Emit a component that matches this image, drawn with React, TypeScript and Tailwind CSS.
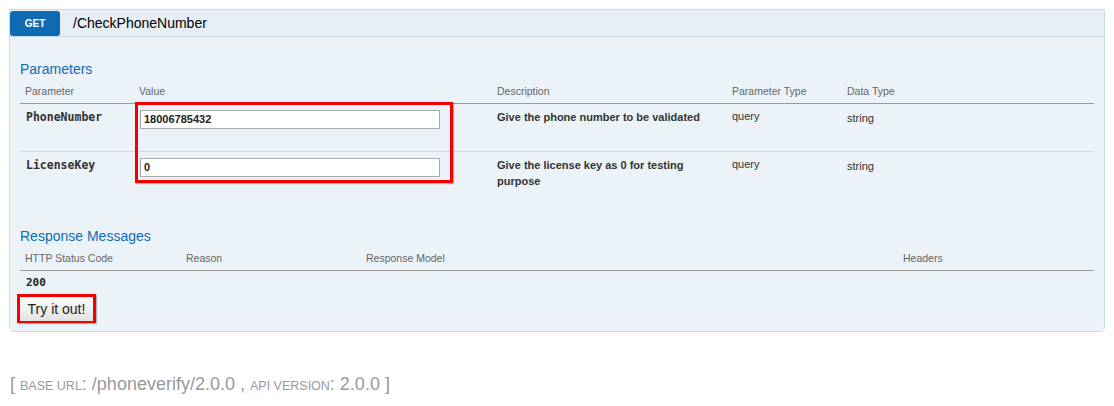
import React from "react";

const PARAMS = [
  { name: "PhoneNumber", value: "18006785432", desc: "Give the phone number to be validated", ptype: "query", dtype: "string", h: "h-[48px] border-b border-[#d4d8dc]" },
  { name: "LicenseKey", value: "0", desc: "Give the license key as 0 for testing purpose", ptype: "query", dtype: "string", h: "h-[48px]" },
];

const SANS = "font-['Liberation_Sans',Arial,sans-serif]";
const MONO = "font-['DejaVu_Sans_Mono',monospace]";

export default function App() {
  return (
    <div className={`relative w-[1114px] h-[406px] bg-white pt-[9px] pl-[9px] ${SANS}`}>
      {/* Operation panel */}
      <div className="w-[1096px] border border-[#c3d9ec] rounded-b-[5px] overflow-hidden">
        <div className="h-[27px] bg-[#e7eef6] border-b border-[#c3d9ec] flex items-center">
          <span className="w-[50px] h-[25px] bg-[#0f6ab4] rounded-[3px] text-white text-[10px] font-bold flex items-center justify-center">GET</span>
          <span className="ml-[13px] text-[14px] text-black">/CheckPhoneNumber</span>
        </div>

        <div className="bg-[#ebf3f9] px-[10px] pt-[22px] pb-[8px]">
          <h4 className="text-[#0f6ab4] text-[14px] leading-[20px]">Parameters</h4>

          {/* Parameter table */}
          <div className="grid grid-cols-[114px_358px_235px_115px_1fr] h-[25px] pt-[2px] items-center border-b border-[#9a9a9a] text-[10.5px] text-[#666]">
            <div className="pl-[5px]">Parameter</div>
            <div className="pl-[5px]">Value</div>
            <div className="pl-[5px]">Description</div>
            <div className="pl-[5px]">Parameter Type</div>
            <div className="pl-[5px]">Data Type</div>
          </div>
          {PARAMS.map((p) => (
            <div key={p.name} className={`grid grid-cols-[114px_358px_235px_115px_1fr] ${p.h} text-[#333]`}>
              <div className={`pl-[6px] pt-[6px] text-[11.5px] font-bold leading-[14px] ${MONO}`}>{p.name}</div>
              <div className="pl-[6px] pt-[6px]">
                <div className="w-[300px] h-[19px] bg-white border border-[#aaa] px-[3px] text-[11px] font-bold leading-[17px] text-[#222]">{p.value}</div>
              </div>
              <div className="pl-[5px] pt-[5px] pr-[20px] text-[11px] font-bold leading-[16px]">{p.desc}</div>
              <div className="pl-[5px] pt-[5px] text-[11px] leading-[14px]">{p.ptype}</div>
              <div className="pl-[5px] pt-[7px] text-[11px] leading-[14px]">{p.dtype}</div>
            </div>
          ))}

          <h4 className="mt-[26px] text-[#0f6ab4] text-[14px] leading-[20px]">Response Messages</h4>
          <div className="grid grid-cols-[161px_180px_537px_1fr] h-[25px] pt-[2px] items-center border-b border-[#9a9a9a] text-[10.5px] text-[#666]">
            <div className="pl-[5px]">HTTP Status Code</div>
            <div className="pl-[5px]">Reason</div>
            <div className="pl-[5px]">Response Model</div>
            <div className="pl-[5px]">Headers</div>
          </div>
          <div className={`h-[24px] flex items-center pl-[6px] text-[11px] font-bold text-[#222] ${MONO}`}>200</div>

          <div className="-ml-[3px] -mt-[1px] w-[79px] h-[29px] border-[3px] border-[#f50000] shadow-[1px_1px_1px_rgba(0,0,0,0.25)]">
            <button className="w-full h-full bg-gradient-to-b from-[#fbfbfb] to-[#e2e2e2] text-[14px] text-[#222] leading-[20px]">Try it out!</button>
          </div>
        </div>
      </div>

      {/* Footer */}
      <div className="mt-[41px] ml-[1px] text-[18px] leading-[22px] text-[#999]">
        [ <span className="uppercase text-[12.5px]">base url</span>: /phoneverify/2.0.0 , <span className="uppercase text-[12.5px]">api version</span>: 2.0.0 ]
      </div>

      {/* annotation around value inputs */}
      <div className="absolute left-[135px] top-[102px] w-[318px] h-[81px] border-[3px] border-[#f50000] shadow-[1px_1px_1px_rgba(0,0,0,0.25)]" />
    </div>
  );
}
